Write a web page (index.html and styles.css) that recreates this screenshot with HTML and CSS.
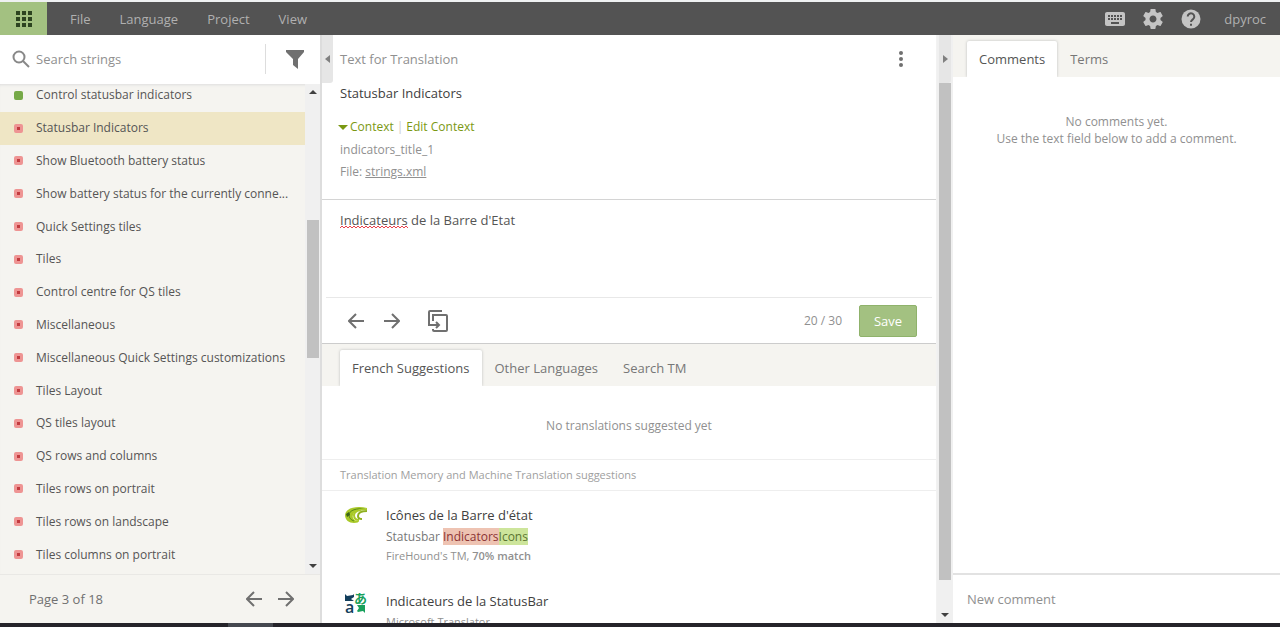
FILE: index.html
```html
<!DOCTYPE html>
<html lang="en">

<head>
    <meta charset="UTF-8">
    <meta name="viewport" content="width=device-width, initial-scale=1.0">
    <title>Statusbar Indicators - Translation Editor</title>
    <link rel="stylesheet" href="styles.css">
</head>

<body>

    <header class="topbar">
        <button type="button" class="apps" aria-label="Apps">
            <svg width="16" height="16" viewBox="0 0 16 16" fill="#2d4420">
                <path d="M0 0h4v4H0zM6 0h4v4H6zM12 0h4v4h-4zM0 6h4v4H0zM6 6h4v4H6zM12 6h4v4h-4zM0 12h4v4H0zM6 12h4v4H6zM12 12h4v4h-4z"/>
            </svg>
        </button>
        <nav class="menu">
            <button type="button">File</button>
            <button type="button">Language</button>
            <button type="button">Project</button>
            <button type="button">View</button>
        </nav>
        <div class="tools">
            <button type="button" aria-label="Keyboard shortcuts">
                <svg width="24" height="24" viewBox="0 0 24 24" fill="currentColor">
                    <path d="M20 5H4c-1.1 0-2 .9-2 2v10c0 1.1.9 2 2 2h16c1.1 0 2-.9 2-2V7c0-1.1-.9-2-2-2zm-9 3h2v2h-2V8zm0 3h2v2h-2v-2zM8 8h2v2H8V8zm0 3h2v2H8v-2zm-1 2H5v-2h2v2zm0-3H5V8h2v2zm9 7H8v-2h8v2zm0-4h-2v-2h2v2zm0-3h-2V8h2v2zm3 3h-2v-2h2v2zm0-3h-2V8h2v2z"/>
                </svg>
            </button>
            <button type="button" aria-label="Settings">
                <svg width="24" height="24" viewBox="0 0 24 24" fill="currentColor">
                    <path d="M19.43 12.98c.04-.32.07-.64.07-.98s-.03-.66-.07-.98l2.11-1.65c.19-.15.24-.42.12-.64l-2-3.46c-.12-.22-.39-.3-.61-.22l-2.49 1c-.52-.4-1.08-.73-1.69-.98l-.38-2.65C14.46 2.18 14.25 2 14 2h-4c-.25 0-.46.18-.49.42l-.38 2.65c-.61.25-1.17.59-1.69.98l-2.49-1c-.23-.09-.49 0-.61.22l-2 3.46c-.13.22-.07.49.12.64l2.11 1.65c-.04.32-.07.65-.07.98s.03.66.07.98l-2.11 1.65c-.19.15-.24.42-.12.64l2 3.46c.12.22.39.3.61.22l2.49-1c.52.4 1.08.73 1.69.98l.38 2.65c.03.24.24.42.49.42h4c.25 0 .46-.18.49-.42l.38-2.65c.61-.25 1.17-.59 1.69-.98l2.49 1c.23.09.49 0 .61-.22l2-3.46c.12-.22.07-.49-.12-.64l-2.11-1.65zM12 15.5c-1.93 0-3.5-1.57-3.5-3.5s1.57-3.5 3.5-3.5 3.5 1.57 3.5 3.5-1.57 3.5-3.5 3.5z"/>
                </svg>
            </button>
            <button type="button" aria-label="Help">
                <svg width="24" height="24" viewBox="0 0 24 24">
                    <circle cx="12" cy="12" r="9.5" fill="currentColor"/>
                    <path d="M8.7 9.6a3.3 3.3 0 1 1 5.3 2.6c-1.2.9-2 1.4-2 2.9" fill="none" stroke="#535353" stroke-width="2"/>
                    <path d="M11 16.7h2v2h-2z" fill="#535353"/>
                </svg>
            </button>
            <button type="button" class="user">dpyroc</button>
        </div>
    </header>

    <main class="workspace">

        <aside class="sidebar">
            <form class="search">
                <svg width="18" height="18" viewBox="0 0 18 18" fill="none" stroke="#888" stroke-width="2">
                    <circle cx="7" cy="7" r="5.5"/>
                    <path d="M11 11l6 6"/>
                </svg>
                <input type="text" placeholder="Search strings" aria-label="Search strings">
                <button type="button" class="filter" aria-label="Filter">
                    <svg width="18" height="20" viewBox="0 0 18 20" fill="#707070">
                        <path d="M0 1h18v2l-6 7v10l-5-4v-6L0 3z"/>
                    </svg>
                </button>
            </form>

            <div class="strings">
                <ul class="string-list">
                    <li class="done">Control statusbar indicators</li>
                    <li class="selected">Statusbar Indicators</li>
                    <li>Show Bluetooth battery status</li>
                    <li>Show battery status for the currently conne...</li>
                    <li>Quick Settings tiles</li>
                    <li>Tiles</li>
                    <li>Control centre for QS tiles</li>
                    <li>Miscellaneous</li>
                    <li>Miscellaneous Quick Settings customizations</li>
                    <li>Tiles Layout</li>
                    <li>QS tiles layout</li>
                    <li>QS rows and columns</li>
                    <li>Tiles rows on portrait</li>
                    <li>Tiles rows on landscape</li>
                    <li>Tiles columns on portrait</li>
                </ul>
                <div class="scrollbar">
                    <span class="arrow-up"></span>
                    <div class="track"><span class="thumb"></span></div>
                    <span class="arrow-down"></span>
                </div>
            </div>

            <footer class="pager">
                <span>Page 3 of 18</span>
                <button type="button" aria-label="Previous page">
                    <svg width="16" height="16" viewBox="0 0 16 16" fill="none" stroke="currentColor" stroke-width="2"><path d="M16 8H2M8 1L1 8l7 7"/></svg>
                </button>
                <button type="button" aria-label="Next page">
                    <svg width="16" height="16" viewBox="0 0 16 16" fill="none" stroke="currentColor" stroke-width="2"><path d="M0 8h14M8 1l7 7-7 7"/></svg>
                </button>
            </footer>
        </aside>

        <section class="editor">
            <button type="button" class="handle handle-left" aria-label="Hide strings"><span></span></button>

            <div class="source">
                <div class="source-head">
                    <h2>Text for Translation</h2>
                    <button type="button" aria-label="More">
                        <svg width="4" height="16" viewBox="0 0 4 16" fill="#707070"><circle cx="2" cy="2" r="2"/><circle cx="2" cy="8" r="2"/><circle cx="2" cy="14" r="2"/></svg>
                    </button>
                </div>
                <p class="source-text">Statusbar Indicators</p>
                <div class="context-links">
                    <button type="button" class="context-toggle">Context</button>
                    <span>|</span>
                    <button type="button">Edit Context</button>
                </div>
                <p class="context">indicators_title_1</p>
                <p class="context">File: <a href="#">strings.xml</a></p>
            </div>

            <form class="translation">
                <div class="field">
                    <textarea aria-label="Translation">Indicateurs de la Barre d'Etat</textarea>
                    <!-- spelling mark -->
                    <svg class="spelling" width="68" height="4">
                        <defs>
                            <pattern id="wave" width="4" height="4" patternUnits="userSpaceOnUse">
                                <path d="M0 3l2-2 2 2" fill="none" stroke="#e8404a"/>
                            </pattern>
                        </defs>
                        <rect width="68" height="4" fill="url(#wave)"/>
                    </svg>
                </div>
                <div class="actions">
                    <button type="button" aria-label="Previous string">
                        <svg width="16" height="16" viewBox="0 0 16 16" fill="none" stroke="currentColor" stroke-width="2"><path d="M16 8H2M8 1L1 8l7 7"/></svg>
                    </button>
                    <button type="button" aria-label="Next string">
                        <svg width="16" height="16" viewBox="0 0 16 16" fill="none" stroke="currentColor" stroke-width="2"><path d="M0 8h14M8 1l7 7-7 7"/></svg>
                    </button>
                    <button type="button" class="copy" aria-label="Copy source">
                        <svg width="20" height="22" viewBox="0 0 20 22" fill="none" stroke="currentColor" stroke-width="2">
                            <path d="M14 1H2a1 1 0 0 0-1 1v13h9M5 11V5h13a1 1 0 0 1 1 1v14a1 1 0 0 1-1 1H6a1 1 0 0 1-1-1v-1"/>
                            <path d="M8 12l3 3-3 3"/>
                        </svg>
                    </button>
                    <span class="count">20 / 30</span>
                    <button type="submit" class="save">Save</button>
                </div>
            </form>

            <div class="tabs suggestion-tabs">
                <button type="button" class="tab active">French Suggestions</button>
                <button type="button" class="tab">Other Languages</button>
                <button type="button" class="tab">Search TM</button>
            </div>

            <p class="empty">No translations suggested yet</p>
            <h3>Translation Memory and Machine Translation suggestions</h3>

            <div class="suggestion">
                <svg width="24" height="20" viewBox="0 0 24 20">
                    <path d="M22 3C13 1 1 2 0 10c0 5 4 8 9 8 3 0 5-1 5-2-5 0-7-3-6-6 1-4 7-6 14-7z" fill="#a9c928"/>
                    <path d="M20 4C12 3 4 5 4 10c0 3 2 5 5 6" fill="none" stroke="#5b8a1a"/>
                    <path d="M22 4C14 4 9 7 9 10c0 3 2 5 5 5" fill="none" stroke="#a9c928" stroke-width="2"/>
                    <path d="M22 6c-6 0-9 2-9 5 0 2 2 3 4 3" fill="none" stroke="#8fb020" stroke-width="2"/>
                    <path d="M1 9l3-2 1 3-3 2z" fill="#3c6417"/>
                </svg>
                <div>
                    <h4>Icônes de la Barre d'état</h4>
                    <p class="diff">Statusbar <del>Indicators</del><ins>Icons</ins></p>
                    <p class="origin">FireHound's TM, <b>70% match</b></p>
                </div>
            </div>

            <div class="suggestion">
                <svg class="translator" width="24" height="24" viewBox="0 0 24 24" aria-hidden="true">
                    <path d="M0 3l2 2 6-1 1-1v3L6 8l3 2H0z" fill="#123e5c"/>
                    <path d="M12 14h8v8l-2-2-5 1-1-1 2-3z" fill="#18a05c"/>
                    <text x="0" y="22" font-size="16" fill="#123e5c">a</text>
                    <text x="9" y="12" font-size="13" fill="#18a05c">あ</text>
                </svg>
                <div>
                    <h4>Indicateurs de la StatusBar</h4>
                    <p class="origin">Microsoft Translator</p>
                </div>
            </div>
        </section>

        <div class="divider">
            <button type="button" class="handle" aria-label="Hide comments"><span></span></button>
            <span class="thumb"></span>
            <span class="arrow-down"></span>
        </div>

        <aside class="comments">
            <div class="tabs">
                <button type="button" class="tab active">Comments</button>
                <button type="button" class="tab">Terms</button>
            </div>
            <p class="no-comments">No comments yet.<br>Use the text field below to add a comment.</p>
            <input type="text" class="new-comment" placeholder="New comment" aria-label="New comment">
        </aside>

    </main>

    <div class="taskbar"><span></span></div>

</body>

</html>
```
FILE: styles.css
```css
*, *::before, *::after {
    box-sizing: border-box;
}

body {
    margin: 0;
    height: 100vh;
    display: flex;
    flex-direction: column;
    overflow: hidden;
    font-family: "Open Sans", "Noto Sans", sans-serif;
    font-size: 13px;
    line-height: 20px;
    color: #555;
    background: #fff;
}

h2, h3, h4, p, ul {
    margin: 0;
    padding: 0;
    font-weight: normal;
}

button {
    padding: 0;
    border: none;
    background: none;
    font: inherit;
    color: inherit;
    cursor: pointer;
}

input, textarea {
    border: none;
    outline: none;
    background: none;
    font: inherit;
    color: inherit;
}

::placeholder {
    color: #909090;
    opacity: 1;
}

svg {
    display: block;
    flex: none;
}

/* top bar */
.topbar {
    display: flex;
    height: 35px;
    flex: none;
    border-top: 2px solid #eff1f2;
    background: #535353;
    color: #b0b0b0;
}

.apps {
    display: flex;
    align-items: center;
    justify-content: center;
    width: 47px;
    background: #a3c181;
}

.menu {
    display: flex;
    gap: 29px;
    margin-left: 23px;
}

.tools {
    display: flex;
    align-items: center;
    gap: 14px;
    margin-left: auto;
    margin-right: 14px;
    color: #c4c4c4;
}

.tools .user {
    margin-left: 7px;
    color: #b0b0b0;
}

/* columns */
.workspace {
    display: grid;
    grid-template-columns: 322px 1fr 16px 327px;
    flex: 1;
    min-height: 0;
}

.workspace > * {
    min-width: 0;
    min-height: 0;
}

/* string list */
.sidebar {
    display: flex;
    flex-direction: column;
    border-right: 2px solid #ddd;
    background: #f5f4f0;
}

.search {
    display: flex;
    align-items: center;
    height: 49px;
    flex: none;
    padding: 0 1px 2px 12px;
    background: #fff;
}

.search input {
    flex: 1;
    min-width: 0;
    padding: 0 6px;
}

.filter {
    display: flex;
    align-items: center;
    justify-content: center;
    width: 54px;
    height: 30px;
    padding-left: 4px;
    border-left: 1px solid #ddd;
}

.strings {
    display: flex;
    flex: 1;
    min-height: 0;
    overflow: hidden;
    box-shadow: inset 0 3px 3px -2px #ddd;
}

.string-list {
    display: flex;
    flex-direction: column;
    flex: 1;
    min-width: 0;
    margin: -5px 0 3px;
    list-style: none;
    font-size: 12px;
}

.string-list li {
    display: flex;
    align-items: center;
    gap: 13px;
    flex: 1;
    padding-left: 14px;
    white-space: nowrap;
}

.string-list li::before {
    content: "";
    flex: none;
    width: 9px;
    height: 9px;
    border: 3px solid #ee9493;
    border-radius: 2px;
    background: #c23b3f;
}

.string-list .done::before {
    border-color: #76a947;
    background: #76a947;
}

.string-list .selected {
    background: #efe6c5;
}

.scrollbar {
    display: flex;
    flex-direction: column;
    align-items: center;
    width: 15px;
    padding: 6px 0;
    background: #f0f0f0;
}

.arrow-up, .arrow-down {
    flex: none;
    border: 4px solid transparent;
}

.arrow-up {
    border-top: none;
    border-bottom-color: #404040;
}

.arrow-down {
    border-bottom: none;
    border-top-color: #404040;
}

.track {
    display: flex;
    flex-direction: column;
    flex: 1;
}

.track::before {
    content: "";
    flex: 125;
}

.track::after {
    content: "";
    flex: 205;
}

.thumb {
    width: 12px;
    background: #c1c1c1;
}

.track .thumb {
    flex: 138;
}

.pager {
    display: flex;
    align-items: center;
    gap: 16px;
    height: 49px;
    flex: none;
    padding: 0 26px 0 29px;
    border-top: 1px solid #e9e8e5;
    color: #707070;
}

.pager span {
    margin-right: auto;
}

/* editor */
.editor {
    position: relative;
    overflow: hidden;
    border-right: 1px solid #f2f2f2;
}

.handle {
    display: flex;
    align-items: center;
    justify-content: center;
    height: 48px;
    background: #e6e6e6;
    border-radius: 0 0 3px 0;
}

.handle span {
    border: 4px solid transparent;
    border-right: none;
    border-left: 5px solid #808080;
}

.handle-left {
    position: absolute;
    top: 0;
    left: 0;
    width: 11px;
}

.handle-left span {
    border: 4px solid transparent;
    border-left: none;
    border-right: 5px solid #808080;
}

.source {
    padding: 14px 33px 16px 18px;
    border-bottom: 1px solid #d4d4d4;
}

.source-head {
    display: flex;
    justify-content: space-between;
    color: #909090;
}

.source-head h2 {
    font-size: 13px;
}

.source-text {
    margin-top: 14px;
    color: #404040;
}

.context-links {
    display: flex;
    gap: 3px;
    margin: 14px 0 2px;
    font-size: 12px;
    color: #7a9812;
}

.context-links span {
    color: #ccc;
}

.context-toggle {
    display: flex;
    align-items: center;
    gap: 2px;
    margin-left: -2px;
}

.context-toggle::before {
    content: "";
    border: 5px solid transparent;
    border-top-color: currentColor;
    border-bottom: none;
}

.context {
    padding: 1px 0;
    font-size: 12px;
    color: #909090;
}

.context a {
    color: inherit;
}

.field {
    position: relative;
    margin: 0 4px;
    border-bottom: 1px solid #e8e8e8;
}

.field textarea {
    display: block;
    width: 100%;
    height: 97px;
    padding: 10px 14px;
    resize: none;
}

.spelling {
    position: absolute;
    top: 25px;
    left: 14px;
}

.actions {
    display: flex;
    align-items: center;
    height: 46px;
    padding: 0 19px 0 26px;
    gap: 20px;
    border-bottom: 1px solid #ccc;
    color: #707070;
}

.copy {
    margin-left: 8px;
}

.count {
    margin-left: auto;
    font-size: 12px;
    color: #909090;
}

.save {
    width: 58px;
    height: 32px;
    margin-left: -3px;
    border: 1px solid #8fb26b;
    border-radius: 2px;
    background: #a3c181;
    color: #fff;
}

.tabs {
    display: flex;
    align-items: flex-end;
    gap: 1px;
    height: 42px;
    overflow: hidden;
    padding-left: 14px;
    background: #f5f4f0;
    color: #777;
}

.suggestion-tabs {
    padding-left: 18px;
}

.tab {
    height: 36px;
    padding: 0 12px;
}

.tab.active {
    background: #fff;
    border-radius: 2px 2px 0 0;
    box-shadow: 0 0 3px #bbb;
    color: #555;
}

.empty {
    padding: 30px 0 24px;
    border-bottom: 1px solid #eee;
    text-align: center;
    font-size: 12px;
    line-height: 19px;
    color: #909090;
}

.editor h3 {
    padding: 5px 18px;
    border-bottom: 1px solid #eee;
    font-size: 11px;
    color: #a0a0a0;
}

.suggestion {
    display: flex;
    gap: 17px;
    padding: 14px 23px 12px;
}

.suggestion h4 {
    font-size: 13px;
    color: #404040;
}

.translator {
    font-family: "Open Sans", "Noto Sans CJK JP", sans-serif;
    font-weight: 600;
}

.diff {
    margin-top: 2px;
    font-size: 12px;
    color: #777;
}

.diff del, .diff ins {
    text-decoration: none;
}

.diff del {
    background: #eec3b2;
    color: #8c3434;
}

.diff ins {
    background: #cde59b;
    color: #5b7531;
}

.origin {
    font-size: 11px;
    line-height: 18px;
    color: #909090;
}

.suggestion h4 + .origin {
    margin-top: 2px;
}

.origin b {
    font-weight: 600;
}

/* divider with the page scrollbar */
.divider {
    display: flex;
    flex-direction: column;
    align-items: center;
    padding-bottom: 6px;
    background: #f0f0f0;
}

.divider .handle {
    width: 12px;
    flex: none;
}

.divider .thumb {
    flex: 1;
    margin-bottom: 33px;
}

/* comments */
.comments {
    display: flex;
    flex-direction: column;
}

.no-comments {
    margin-top: 36px;
    text-align: center;
    font-size: 12px;
    line-height: 17px;
    color: #909090;
}

.new-comment {
    height: 50px;
    margin-top: auto;
    padding: 0 14px;
    border-top: 2px solid #e2e2e2;
}

.taskbar {
    height: 4px;
    flex: none;
    background: #25242a;
}

.taskbar span {
    display: block;
    width: 45px;
    height: 4px;
    margin-left: 228px;
    background: #45484f;
}
```
